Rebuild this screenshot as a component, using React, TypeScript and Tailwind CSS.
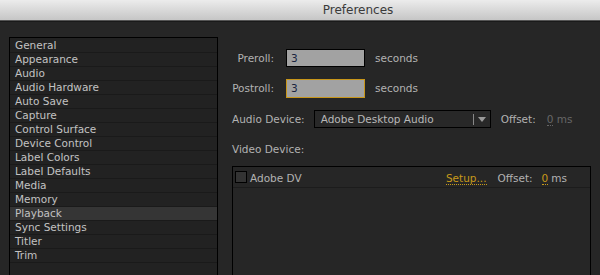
import React from "react";

const items = [
  "General",
  "Appearance",
  "Audio",
  "Audio Hardware",
  "Auto Save",
  "Capture",
  "Control Surface",
  "Device Control",
  "Label Colors",
  "Label Defaults",
  "Media",
  "Memory",
  "Playback",
  "Sync Settings",
  "Titler",
  "Trim",
];

export default function App() {
  return (
    <div
      className="w-[600px] h-[275px] overflow-hidden bg-[#262626] flex flex-col text-[10.5px] leading-none"
      style={{ fontFamily: '"DejaVu Sans", sans-serif' }}
    >
      <div className="h-[21px] shrink-0 bg-gradient-to-b from-[#ececec] to-[#c6c6c6] flex items-center justify-center border-b border-[#555]">
        <span className="ml-[116px] text-[12px] text-[#3a3a3a]">Preferences</span>
      </div>
      <div className="flex-1 flex items-start border-t border-[#1a1a1a]">
        <div className="ml-[9px] mt-[15px] w-[209px] h-[260px] shrink-0 border border-black bg-[#222222] flex flex-col pt-[1px]">
          {items.map((it) => (
            <div
              key={it}
              className={`h-[14px] shrink-0 border-b border-[#1a1a1a] pl-[5px] flex items-center text-[#c2c2c2] ${
                it === "Playback" ? "bg-[#353535]" : ""
              }`}
            >
              {it}
            </div>
          ))}
        </div>
        <div className="ml-[14px] flex-1 flex flex-col text-[#b2b2b2]">
          <div className="mt-[27px] flex items-center h-[18px]">
            <span className="w-[42px] text-right">Preroll:</span>
            <div className="ml-[12px] w-[79px] h-[18px] bg-[#a2a2a2] border border-black flex items-center pl-[4px] text-[#1a2440]">
              3
            </div>
            <span className="ml-[10px]">seconds</span>
          </div>
          <div className="mt-[12px] flex items-center h-[19px]">
            <span className="w-[42px] text-right">Postroll:</span>
            <div className="ml-[12px] w-[79px] h-[19px] bg-[#a2a2a2] border border-[#c8961a] flex items-center pl-[4px] text-[#1a2440]">
              3
            </div>
            <span className="ml-[10px]">seconds</span>
          </div>
          <div className="mt-[12px] flex items-center h-[18px]">
            <span>Audio Device:</span>
            <div className="ml-[9px] w-[177px] h-[18px] border border-black bg-[#282828] flex items-center text-[#b8b8b8]">
              <span className="pl-[6px] flex-1">Adobe Desktop Audio</span>
              <div className="w-px h-[11px] bg-[#888]" />
              <div className="w-[16px] flex justify-center">
                <div className="w-0 h-0 border-l-[4px] border-r-[4px] border-t-[5px] border-l-transparent border-r-transparent border-t-[#999]" />
              </div>
            </div>
            <span className="ml-[10px]">Offset:</span>
            <span className="ml-[11px] text-[#666]">
              <span className="border-b border-dotted border-[#666]">0</span> ms
            </span>
          </div>
          <div className="mt-[14px] h-[14px] flex items-center">Video Device:</div>
          <div className="mt-[10px] w-[359px] h-[120px] border border-black flex flex-col">
            <div className="h-[21px] border-b border-[#1c1c1c] flex items-center">
              <div className="ml-[2px] w-[12px] h-[12px] border border-black bg-[#333]" />
              <div className="flex-1 flex items-center pt-[3px]">
                <span className="ml-[3px]">Adobe DV</span>
                <span className="ml-auto text-[#c89a1a] border-b border-dotted border-[#c89a1a] leading-[12px]">
                  Setup...
                </span>
                <span className="ml-[11px]">Offset:</span>
                <span className="ml-[9px] text-[#c89a1a] border-b border-dotted border-[#c89a1a] leading-[12px]">0</span>
                <span className="ml-[3px] mr-[23px]">ms</span>
              </div>
            </div>
          </div>
        </div>
      </div>
    </div>
  );
}
